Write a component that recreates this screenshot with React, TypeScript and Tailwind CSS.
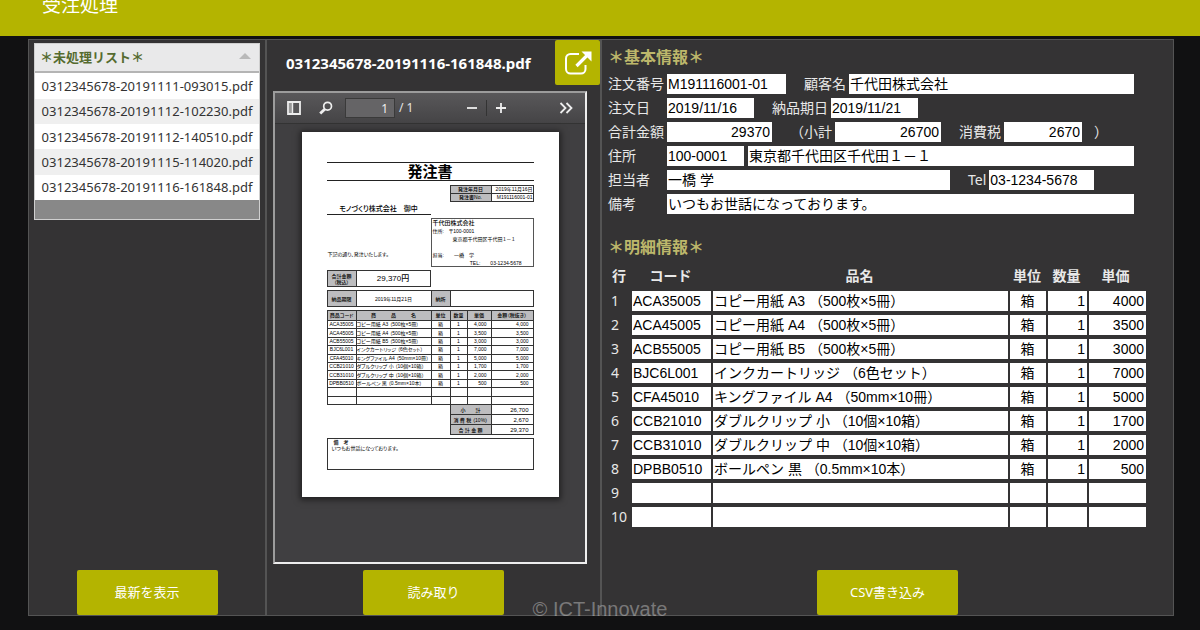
import React from "react";

const FILES = [
  "0312345678-20191111-093015.pdf",
  "0312345678-20191112-102230.pdf",
  "0312345678-20191112-140510.pdf",
  "0312345678-20191115-114020.pdf",
  "0312345678-20191116-161848.pdf",
];

type Item = { code: string; name: string; unit: string; qty: string; price: string };

const item = (code: string, name: string, price: string): Item => ({ code, name, unit: "箱", qty: "1", price });
const blank: Item = { code: "", name: "", unit: "", qty: "", price: "" };

const ITEMS: Item[] = [
  item("ACA35005", "コピー用紙 A3 （500枚×5冊）", "4000"),
  item("ACA45005", "コピー用紙 A4 （500枚×5冊）", "3500"),
  item("ACB55005", "コピー用紙 B5 （500枚×5冊）", "3000"),
  item("BJC6L001", "インクカートリッジ （6色セット）", "7000"),
  item("CFA45010", "キングファイル A4 （50mm×10冊）", "5000"),
  item("CCB21010", "ダブルクリップ 小 （10個×10箱）", "1700"),
  item("CCB31010", "ダブルクリップ 中 （10個×10箱）", "2000"),
  item("DPBB0510", "ボールペン 黒 （0.5mm×10本）", "500"),
  blank,
  blank,
];

const money = (v: string) => (v ? Number(v).toLocaleString("en-US") : "");

const FIELD =
  "h-5 min-w-0 bg-white pl-px pr-[2px] text-[14px] leading-5 text-black outline-none font-['Liberation_Sans','Noto_Sans_CJK_JP',sans-serif]";

function ActionButton({ children }: { children: React.ReactNode }) {
  return (
    <button
      type="button"
      className="h-[45px] w-[141px] shrink-0 self-center rounded-[2px] bg-[#b4b400] text-[13px] text-white"
    >
      {children}
    </button>
  );
}

function Panel({ className = "", children }: { className?: string; children: React.ReactNode }) {
  return <section className={`flex min-w-0 flex-col border border-[#545454] bg-[#343334] ${className}`}>{children}</section>;
}

function Field({
  id,
  label,
  value,
  width,
  first,
  right,
}: {
  id: string;
  label: string;
  value: string;
  width: string;
  first?: boolean;
  right?: boolean;
}) {
  return (
    <>
      <label htmlFor={id} className={first ? "w-[59px] shrink-0" : "mr-[3px] ml-[18px] shrink-0"}>
        {label}
      </label>
      <input id={id} defaultValue={value} className={`${FIELD} ${width} ${right ? "text-right" : ""}`} />
    </>
  );
}

function FileList() {
  return (
    <div className="mx-[5px] mt-[3px] border border-[#cfcfcf] bg-[#888] pb-[19px]">
      <table className="h-[156px] w-full border-collapse">
        <thead>
          <tr className="h-[28px] border-b-2 border-[#b4b4b4] bg-[#e9e9ea]">
            <th className="p-0">
              <button type="button" className="flex w-full items-center justify-between pr-2 pl-[5px] text-[13px] font-bold text-[#556b2f]">
                ＊未処理リスト＊
                <svg viewBox="0 0 12 6" className="mb-1 h-[6px] w-3 fill-[#b9b9b9]" aria-hidden="true">
                  <path d="M6 0l6 6H0z" />
                </svg>
              </button>
            </th>
          </tr>
        </thead>
        <tbody>
          {FILES.map((f) => (
            <tr key={f} className="bg-white even:bg-[#efefef]">
              <td className="p-0 text-center text-[13px] leading-5 text-[#333]">{f}</td>
            </tr>
          ))}
        </tbody>
      </table>
    </div>
  );
}

function Toolbar() {
  return (
    <div className="flex h-[31px] shrink-0 items-center border-b border-[#333] bg-linear-to-b from-[#59585a] to-[#454446] px-3 text-[12px] text-[#e4e4e4]">
      <button type="button" aria-label="サイドバー">
        <svg viewBox="0 0 14 14" className="size-[14px]">
          <path d="M1 1h12v12H1z" fill="#59585a" stroke="#eee" strokeWidth="1.8" />
          <path d="M2 2h3v10H2z" fill="#999" />
          <path d="M5.5 1v12" stroke="#eee" strokeWidth="1.4" />
        </svg>
      </button>
      <button type="button" aria-label="検索" className="ml-[18px]">
        <svg viewBox="0 0 14 14" className="size-[14px]" fill="none" stroke="#eee">
          <circle cx="8.6" cy="5.2" r="3.9" strokeWidth="1.7" />
          <path d="M6 8L1.2 12.6" strokeWidth="2.8" />
        </svg>
      </button>
      <input
        aria-label="ページ"
        defaultValue="1"
        className="ml-3 h-5 w-[50px] border border-[#3a3a3a] bg-[#656466] px-[6px] text-right text-[12px] text-[#eee] outline-none"
      />
      <span className="ml-1">/ 1</span>
      <div className="ml-[54px] flex items-center gap-[9px]">
        <button type="button" aria-label="縮小">
          <svg viewBox="0 0 10 10" className="size-[10px]" stroke="#eee" strokeWidth="1.8">
            <path d="M0 5h10" />
          </svg>
        </button>
        <span className="h-4 w-px bg-[#333]" />
        <button type="button" aria-label="拡大">
          <svg viewBox="0 0 10 10" className="size-[10px]" stroke="#eee" strokeWidth="1.8">
            <path d="M0 5h10M5 0v10" />
          </svg>
        </button>
      </div>
      <button type="button" aria-label="ツール" className="ml-auto">
        <svg viewBox="0 0 14 12" className="h-3 w-[14px]" fill="none" stroke="#eee" strokeWidth="1.8">
          <path d="M1.5 1l5 5-5 5M7.500 1l5 5-5 5" />
        </svg>
      </button>
    </div>
  );
}

const C = "border border-[#333] p-0 font-normal";
const H = "border border-[#333] bg-[#bdbdbf] p-0 text-center font-medium";

function OrderSheet() {
  return (
    <article className="mt-2 flex h-[365px] w-[257px] shrink-0 flex-col self-center bg-white px-[25px] pt-[30px] font-['Liberation_Sans','Noto_Sans_CJK_JP',sans-serif] text-[5px] leading-[8px] text-black shadow-[0_1px_6px_2px_rgba(0,0,0,0.5)] [font-feature-settings:'palt']">
      <h2 className="h-[19px] border-y border-[#222] text-center text-[15px] leading-[17px] font-bold">発注書</h2>
      <table className="mt-1 ml-auto w-[84px] table-fixed border-collapse leading-[7px]">
        <tbody>
          <tr>
            <th className={`${H} w-[41px]`}>発注年月日</th>
            <td className={`${C} text-right`}>2019年11月16日</td>
          </tr>
          <tr>
            <th className={H}>発注書No.</th>
            <td className={`${C} text-right`}>M191116001-01</td>
          </tr>
        </tbody>
      </table>
      <p className="mt-[2px] h-[11px] w-[104px] border-b border-[#222] text-center text-[7px] leading-[10px] font-medium">
        モノづくり株式会社　御中
      </p>
      <div className="mt-[3px] flex h-[49px]">
        <p className="w-[104px] pt-8 pl-px">下記の通り、発注いたします。</p>
        <div className="flex-1 border border-[#555] pl-px whitespace-pre">
          <p className="text-[6px] font-medium">千代田株式会社</p>
          <p>住所:　〒100-0001</p>
          <p className="pl-5">東京都千代田区千代田１－１</p>
          <p>{" "}</p>
          <p>担当:　　一橋　学</p>
          <p className="pr-[11px] text-right">TEL:　　03-1234-5678</p>
        </div>
      </div>
      <table className="mt-[3px] h-[17px] w-[104px] table-fixed border-collapse">
        <tbody>
          <tr>
            <th className={`${H} w-[29px] leading-[6px]`}>
              合計金額
              <br />
              （税込）
            </th>
            <td className="border border-[#333] p-0 text-center text-[8px] font-medium">29,370円</td>
          </tr>
        </tbody>
      </table>
      <table className="mt-[3px] h-[17px] w-full table-fixed border-collapse">
        <tbody>
          <tr>
            <th className={`${H} w-[29px]`}>納品期限</th>
            <td className={`${C} w-[75px] text-center`}>2019年11月21日</td>
            <th className={`${H} w-[19px]`}>納所</th>
            <td className={C} />
          </tr>
        </tbody>
      </table>
      <table className="mt-[3px] h-[95px] w-full table-fixed border-collapse leading-[7px]">
        <thead>
          <tr className="h-[10px]">
            <th className={`${H} w-[29px] whitespace-nowrap`}>商品コード</th>
            <th className={`${H} w-[75px]`}>商　　　品　　　名</th>
            <th className={`${H} w-[19px]`}>単位</th>
            <th className={`${H} w-[17px]`}>数量</th>
            <th className={`${H} w-[24px]`}>単価</th>
            <th className={H}>金額（税抜き）</th>
          </tr>
        </thead>
        <tbody>
          {ITEMS.map((r, i) => (
            <tr key={i}>
              <td className={`${C} text-center`}>{r.code || "\u00a0"}</td>
              <td className={`${C} overflow-hidden whitespace-nowrap`}>{r.name}</td>
              <td className={`${C} text-center`}>{r.unit}</td>
              <td className={`${C} text-center`}>{r.qty}</td>
              <td className={`${C} pr-1 text-right`}>{money(r.price)}</td>
              <td className={`${C} pr-1 text-right`}>{money(r.price)}</td>
            </tr>
          ))}
        </tbody>
      </table>
      <table className="-mt-px ml-auto h-[31px] w-[84px] table-fixed border-collapse">
        <tbody>
          {[
            ["小　　計", "26,700"],
            ["消 費 税 （10%）", "2,670"],
            ["合 計 金 額", "29,370"],
          ].map(([k, v]) => (
            <tr key={k}>
              <th className={`${H} w-[41px] whitespace-pre`}>{k}</th>
              <td className="border border-[#333] p-0 pr-1 text-right text-[6px]">{v}</td>
            </tr>
          ))}
        </tbody>
      </table>
      <div className="mt-[3px] h-8 border border-[#333] px-1 leading-[6px]">
        <p className="pl-[2px] font-medium">備　考</p>
        <p>いつもお世話になっております。</p>
      </div>
    </article>
  );
}

function DetailTable() {
  const cell = "p-0 py-[2px] pr-[2px] last:pr-0";
  return (
    <table className="mr-[21px] table-fixed border-collapse text-[14px] leading-5">
      <thead>
        <tr className="h-[27px] font-bold">
          <th className="w-[24px] p-0 pl-1 text-left whitespace-nowrap">行</th>
          <th className="w-[81px] p-0 pr-1">コード</th>
          <th className="p-0 pr-1">品名</th>
          <th className="w-[38px] p-0 pr-1">単位</th>
          <th className="w-[41px] p-0 pr-1">数量</th>
          <th className="w-[57px] p-0 pr-1">単価</th>
        </tr>
      </thead>
      <tbody>
        {ITEMS.map((r, i) => (
          <tr key={i} className="h-6">
            <th scope="row" className="p-0 pl-[3px] text-left font-normal">
              {i + 1}
            </th>
            <td className={cell}>
              <input aria-label={`コード ${i + 1}`} defaultValue={r.code} className={`${FIELD} block w-full`} />
            </td>
            <td className={cell}>
              <input aria-label={`品名 ${i + 1}`} defaultValue={r.name} className={`${FIELD} block w-full`} />
            </td>
            <td className={cell}>
              <input aria-label={`単位 ${i + 1}`} defaultValue={r.unit} className={`${FIELD} block w-full text-center`} />
            </td>
            <td className={cell}>
              <input aria-label={`数量 ${i + 1}`} defaultValue={r.qty} className={`${FIELD} block w-full text-right`} />
            </td>
            <td className={cell}>
              <input aria-label={`単価 ${i + 1}`} defaultValue={r.price} className={`${FIELD} block w-full text-right`} />
            </td>
          </tr>
        ))}
      </tbody>
    </table>
  );
}

export default function App() {
  return (
    <div className="relative flex min-h-screen flex-col bg-[#111112] font-['Noto_Sans','Noto_Sans_CJK_JP',sans-serif] text-[#e8e8e8]">
      <header className="flex h-9 items-end bg-[#b4b400] pb-[17px] pl-[42px]">
        <h1 className="text-[19px] leading-7 text-white">受注処理</h1>
      </header>
      <main className="grid flex-1 grid-cols-[238fr_335fr_573fr] pt-[3px] pr-[26px] pb-[14px] pl-7">
        <Panel>
          <FileList />
          <div className="mt-auto flex flex-col">
            <ActionButton>最新を表示</ActionButton>
          </div>
        </Panel>

        <Panel>
          <div className="flex items-start justify-between">
            <h2 className="pl-[19px] text-[15px] leading-[46px] font-bold text-white">0312345678-20191116-161848.pdf</h2>
            <button type="button" aria-label="別ウィンドウで開く" className="flex h-[45px] w-[45px] items-center justify-center rounded-[2px] bg-[#b4b400]">
              <svg viewBox="0 0 28 26" className="h-[26px] w-7" fill="none" stroke="#fff">
                <path d="M15 4H6.5A4.5 4.5 0 0 0 2 8.500V19a4.500 4.500 0 0 0 4.500 4.500H17a4.500 4.500 0 0 0 4.500-4.500v-4" strokeWidth="2" />
                <path d="M12.500 16L23 5.500" strokeWidth="3.200" />
                <path d="M17.500 1.500h10v10z" fill="#fff" stroke="none" />
              </svg>
            </button>
          </div>
          <div className="mt-[5px] mr-[13px] mb-[6px] ml-[6px] flex flex-1 flex-col border-2 border-t-[#9c9c9c] border-r-[#eee] border-b-[#eee] border-l-[#9c9c9c] bg-[#403f41]">
            <Toolbar />
            <OrderSheet />
          </div>
          <ActionButton>読み取り</ActionButton>
        </Panel>

        <Panel className="px-[6px]">
          <h2 className="mt-[5px] text-[16px] leading-6 font-bold text-[#bdb76b]">＊基本情報＊</h2>
          <form className="mt-[3px] mr-[33px] flex flex-col text-[14px] leading-5 whitespace-nowrap">
            <div className="flex h-6 items-center">
              <Field first id="order-no" label="注文番号" value="M191116001-01" width="w-[119px]" />
              <Field id="customer" label="顧客名" value="千代田株式会社" width="flex-1" />
            </div>
            <div className="flex h-6 items-center">
              <Field first id="order-date" label="注文日" value="2019/11/16" width="w-[87px]" />
              <Field id="due-date" label="納品期日" value="2019/11/21" width="w-[87px]" />
            </div>
            <div className="flex h-6 items-center">
              <Field first right id="total" label="合計金額" value="29370" width="w-[105px]" />
              <Field right id="subtotal" label="（小計" value="26700" width="w-[106px]" />
              <Field right id="tax" label="消費税" value="2670" width="w-[78px]" />
              <span className="ml-3">）</span>
            </div>
            <div className="flex h-6 items-center">
              <Field first id="zip" label="住所" value="100-0001" width="w-[77px]" />
              <input aria-label="住所" defaultValue="東京都千代田区千代田１－１" className={`${FIELD} ml-1 flex-1`} />
            </div>
            <div className="flex h-6 items-center">
              <Field first id="person" label="担当者" value="一橋 学" width="w-[283px]" />
              <Field id="tel" label="Tel" value="03-1234-5678" width="w-[105px]" />
            </div>
            <div className="flex h-6 items-center">
              <Field first id="note" label="備考" value="いつもお世話になっております。" width="flex-1" />
            </div>
          </form>
          <h2 className="mt-[19px] text-[16px] leading-6 font-bold text-[#bdb76b]">＊明細情報＊</h2>
          <div className="mt-[3px] flex flex-col">
            <DetailTable />
          </div>
          <div className="mt-auto flex flex-col">
            <ActionButton>CSV書き込み</ActionButton>
          </div>
        </Panel>
      </main>
      <p className="pointer-events-none absolute inset-x-0 bottom-[9px] text-center font-['Liberation_Sans',sans-serif] text-[20px] leading-6 text-white/35">
        © ICT-Innovate
      </p>
    </div>
  );
}
